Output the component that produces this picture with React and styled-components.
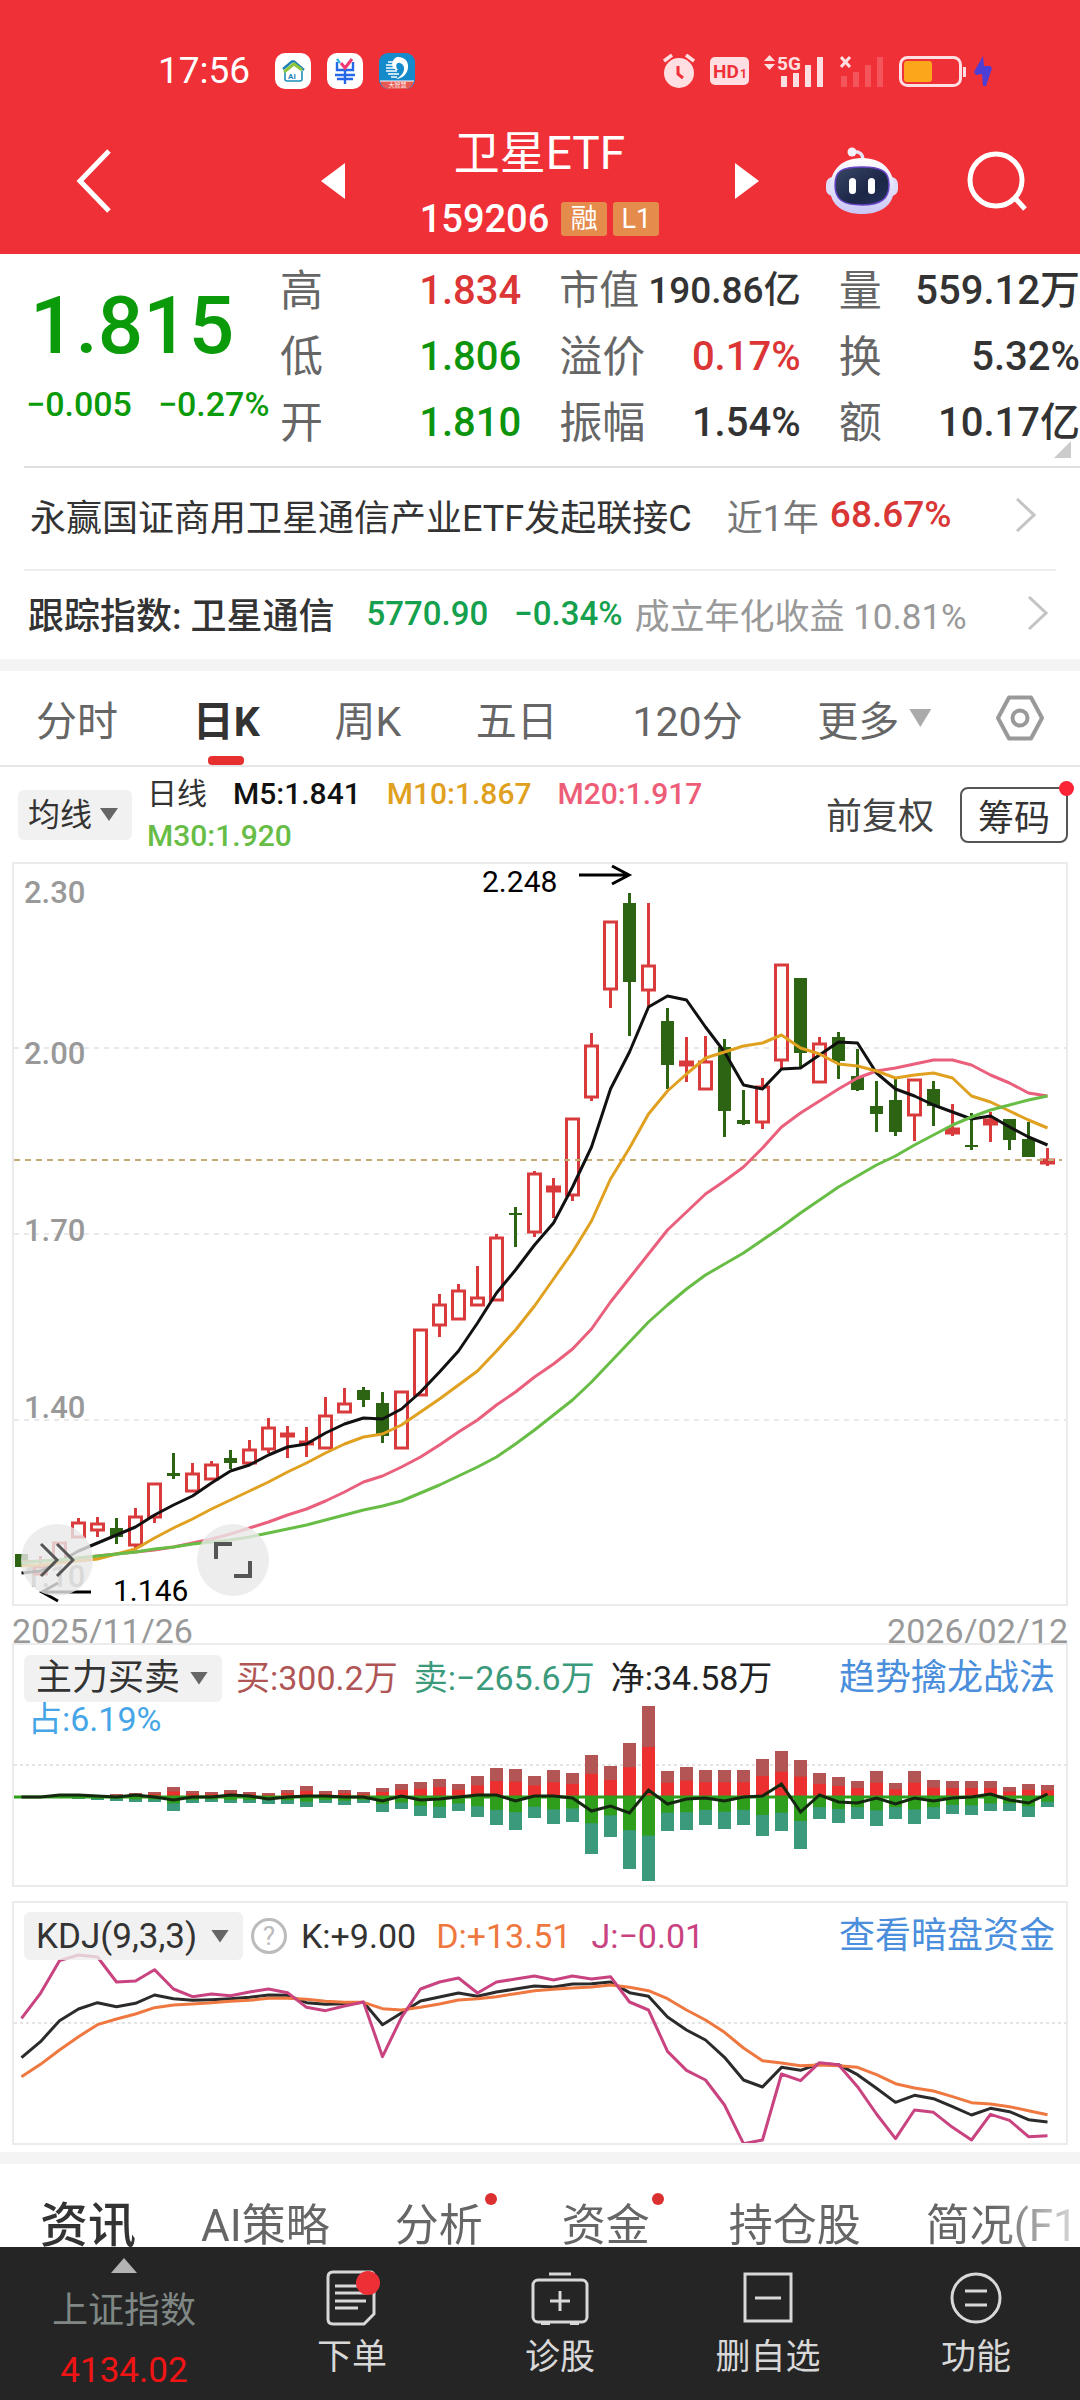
import React, { useState } from 'react'
import styled, { createGlobalStyle } from 'styled-components'

// K线: [颜色, 实体顶, 实体底, 最高, 最低]
const candles = [
  ['g', 1554, 1567, 1554, 1567], ['r', 1567, 1574, 1556, 1576], ['r', 1543, 1562, 1543, 1562],
  ['r', 1523, 1537, 1518, 1537], ['r', 1524, 1530, 1517, 1537], ['g', 1528, 1537, 1518, 1544],
  ['r', 1517, 1545, 1508, 1549], ['r', 1484, 1517, 1484, 1523], ['g', 1473, 1476, 1453, 1479],
  ['r', 1474, 1491, 1463, 1491], ['r', 1465, 1479, 1461, 1479], ['g', 1458, 1463, 1450, 1469],
  ['r', 1450, 1463, 1440, 1463], ['r', 1428, 1449, 1418, 1453], ['r', 1434, 1436, 1426, 1458],
  ['r', 1442, 1444, 1427, 1457], ['r', 1416, 1448, 1397, 1448], ['r', 1404, 1412, 1388, 1412],
  ['g', 1390, 1400, 1387, 1407], ['g', 1403, 1436, 1392, 1443], ['r', 1392, 1448, 1392, 1448],
  ['r', 1330, 1395, 1330, 1395], ['r', 1305, 1325, 1294, 1337], ['r', 1291, 1319, 1284, 1319],
  ['r', 1298, 1305, 1266, 1305], ['r', 1238, 1300, 1234, 1300], ['g', 1213, 1215, 1207, 1247],
  ['r', 1174, 1232, 1171, 1237], ['r', 1187, 1191, 1178, 1218], ['r', 1119, 1195, 1119, 1201],
  ['r', 1046, 1097, 1033, 1101], ['r', 922, 989, 922, 1008], ['g', 903, 982, 893, 1036],
  ['r', 966, 990, 903, 1006], ['g', 1021, 1065, 1008, 1089], ['r', 1062, 1065, 1037, 1082],
  ['r', 1062, 1089, 1036, 1089], ['g', 1047, 1111, 1039, 1137], ['g', 1120, 1124, 1090, 1125],
  ['r', 1087, 1122, 1078, 1129], ['r', 965, 1060, 965, 1069], ['g', 978, 1053, 978, 1069],
  ['r', 1044, 1082, 1037, 1082], ['g', 1037, 1061, 1032, 1079], ['g', 1076, 1090, 1049, 1091],
  ['g', 1106, 1114, 1081, 1132], ['g', 1100, 1132, 1078, 1136], ['r', 1080, 1115, 1080, 1141],
  ['g', 1089, 1106, 1081, 1126], ['r', 1129, 1133, 1104, 1136], ['g', 1145, 1147, 1113, 1150],
  ['r', 1120, 1124, 1112, 1142], ['g', 1119, 1140, 1119, 1150], ['g', 1139, 1157, 1122, 1157],
  ['r', 1160, 1163, 1148, 1166],
]

const ma5 = [1573, 1571, 1562, 1551, 1543, 1535, 1527, 1515, 1505, 1496, 1483, 1471, 1465, 1455, 1447, 1444, 1433, 1424, 1418, 1419, 1409, 1392, 1372, 1351, 1323, 1293, 1270, 1245, 1223, 1187, 1147, 1089, 1052, 1007, 996, 1000, 1027, 1052, 1085, 1089, 1069, 1068, 1055, 1042, 1043, 1073, 1089, 1096, 1105, 1112, 1119, 1116, 1127, 1137, 1145]
const ma10 = [1566, 1565, 1563, 1561, 1559, 1554, 1549, 1538, 1528, 1519, 1509, 1500, 1491, 1482, 1472, 1463, 1453, 1444, 1437, 1434, 1425, 1412, 1399, 1385, 1371, 1351, 1330, 1306, 1279, 1252, 1221, 1179, 1148, 1114, 1091, 1074, 1058, 1052, 1046, 1043, 1035, 1048, 1054, 1064, 1066, 1071, 1078, 1075, 1073, 1078, 1096, 1102, 1111, 1120, 1128]
const ma20 = [1562, 1561, 1560, 1558, 1556, 1554, 1552, 1550, 1547, 1543, 1539, 1534, 1528, 1522, 1515, 1509, 1501, 1492, 1482, 1476, 1467, 1457, 1445, 1432, 1420, 1405, 1392, 1377, 1364, 1349, 1329, 1302, 1278, 1254, 1230, 1212, 1194, 1181, 1167, 1148, 1127, 1113, 1101, 1089, 1078, 1071, 1068, 1064, 1060, 1060, 1065, 1075, 1083, 1093, 1096]
const ma30 = [1563, 1561, 1560, 1558, 1556, 1554, 1552, 1549, 1547, 1544, 1542, 1540, 1537, 1533, 1529, 1525, 1520, 1515, 1510, 1506, 1501, 1493, 1485, 1476, 1467, 1457, 1444, 1430, 1415, 1400, 1382, 1362, 1342, 1322, 1305, 1289, 1275, 1264, 1253, 1240, 1227, 1213, 1200, 1187, 1176, 1165, 1156, 1145, 1135, 1125, 1117, 1110, 1105, 1100, 1096]

const buys = [1, 1, 1, 1, 1, 3, 4, 5, 10, 6, 5, 7, 5, 4, 7, 11, 6, 7, 5, 9, 13, 15, 18, 13, 21, 29, 28, 21, 27, 24, 42, 31, 54, 91, 26, 30, 27, 27, 27, 38, 46, 37, 24, 20, 16, 26, 14, 26, 17, 16, 16, 16, 10, 13, 12]
const sells = [1, 1, 1, 2, 3, 4, 5, 5, 14, 6, 5, 6, 6, 7, 7, 10, 6, 8, 6, 15, 12, 19, 21, 14, 20, 28, 33, 21, 27, 25, 57, 40, 72, 84, 34, 33, 28, 32, 28, 39, 34, 52, 22, 26, 22, 29, 22, 27, 22, 17, 18, 14, 14, 20, 10]
const net = [0, 0, 2, 2, 1, 0, 2, 0, -3, 0, 0, 2, 1, -2, 0, 1, 1, 0, 0, -4, 1, -3, -2, 0, 2, 2, -4, 1, 1, -1, -14, -9, -16, 7, -7, -2, -1, -4, 0, 1, 13, -15, 2, -5, -6, -1, -7, -1, -4, -1, 0, 3, -3, -6, 3]

const kLine = [533, 485, 422, 387, 368, 380, 370, 345, 356, 361, 359, 356, 352, 345, 346, 368, 373, 371, 367, 434, 399, 363, 351, 339, 349, 336, 327, 318, 321, 312, 311, 306, 338, 349, 411, 450, 480, 532, 600, 621, 562, 571, 551, 554, 584, 625, 667, 646, 656, 680, 705, 685, 695, 719, 726]
const dLine = [590, 553, 510, 470, 434, 417, 402, 383, 375, 372, 368, 364, 361, 355, 355, 358, 364, 367, 367, 386, 390, 382, 372, 360, 356, 350, 341, 332, 328, 324, 321, 315, 322, 332, 356, 390, 420, 457, 504, 542, 549, 557, 555, 557, 562, 584, 611, 624, 633, 650, 668, 672, 680, 692, 704]
const jLine = [415, 340, 242, 225, 231, 306, 303, 269, 327, 350, 342, 347, 336, 327, 338, 382, 392, 378, 366, 530, 412, 327, 306, 294, 339, 306, 297, 288, 300, 288, 297, 290, 366, 390, 514, 571, 600, 675, 791, 780, 582, 602, 548, 554, 620, 702, 776, 690, 697, 742, 780, 703, 721, 770, 767]

const STEP = 19
const ZERO = 152
const xAt = (i) => 21.5 + i * STEP
const toPoints = (list, fn = (v) => v) => list.map((v, i) => `${xAt(i)},${fn(v)}`).join(' ')
const kdjY = (v) => (v - 69) / 3

const quotes = [
  [['高', '1.834', 'up'], ['低', '1.806', 'down'], ['开', '1.810', 'down']],
  [['市值', '190.86亿', '', true], ['溢价', '0.17%', 'up'], ['振幅', '1.54%', '']],
  [['量', '559.12万', ''], ['换', '5.32%', ''], ['额', '10.17亿', '']],
]
const periods = ['分时', '日K', '周K', '五日', '120分']
const infoTabs = [
  { name: '资讯' }, { name: 'AI策略' }, { name: '分析', dot: true },
  { name: '资金', dot: true }, { name: '持仓股' }, { name: '简况(F10)' },
]

export default function App() {
  const [period, setPeriod] = useState('日K')
  return (
    <>
      <GlobalStyle />
      <Page>
        <Header />
        <QuoteBoard />
        <FundRow href="#fund">
          <span>永赢国证商用卫星通信产业ETF发起联接C</span>
          <FundPeriod>近1年</FundPeriod>
          <FundRate>68.67%</FundRate>
          <Arrow />
        </FundRow>
        <IndexRow href="#index">
          <IndexName>跟踪指数: 卫星通信</IndexName>
          <IndexValue>5770.90</IndexValue>
          <IndexValue>−0.34%</IndexValue>
          <IndexNote>成立年化收益 10.81%</IndexNote>
          <Arrow />
        </IndexRow>
        <Divider />
        <PeriodBar>
          {periods.map((p) => (
            <PeriodButton key={p} $on={p === period} onClick={() => setPeriod(p)}>{p}</PeriodButton>
          ))}
          <PeriodButton>更多<Caret $w={22} $h={18} $color="#aaa" /></PeriodButton>
          <SettingButton aria-label="设置">
            <svg width="48" height="46" viewBox="0 0 48 46" fill="none" stroke="#999" strokeWidth="4" strokeLinejoin="round">
              <path d="M13 2.500H35L46 23L35 43.500H13L2 23Z" />
              <circle cx="24" cy="23" r="7.500" />
            </svg>
          </SettingButton>
        </PeriodBar>
        <MaBar>
          <Picker label="均线" options={['均线', 'BOLL']} width={114} height={50} size={32} />
          <MaLegend>
            <Legend $color="#333" $light>日线</Legend>
            <Legend $color="#111">M5:1.841</Legend>
            <Legend $color="#e0a020">M10:1.867</Legend>
            <Legend $color="#ee5d78">M20:1.917</Legend>
            <Legend $color="#67bd45">M30:1.920</Legend>
          </MaLegend>
          <Adjust>前复权</Adjust>
          <ChipButton>筹码<ChipDot /></ChipButton>
        </MaBar>
        <CandlePanel />
        <DateRow><span>2025/11/26</span><span>2026/02/12</span></DateRow>
        <ForcePanel />
        <KdjPanel />
        <Divider />
        <InfoTabs>
          {infoTabs.map((t, i) => (
            <InfoTab key={t.name} $on={i === 0}>{t.name}{t.dot && <Dot />}</InfoTab>
          ))}
        </InfoTabs>
        <BottomNav />
      </Page>
    </>
  )
}

function Header() {
  return (
    <HeaderStyle>
      <StatusBar>
        <Clock>17:56</Clock>
        <svg width="36" height="36" viewBox="0 0 36 36" fill="none">
          <rect width="36" height="36" rx="10" fill="#fff" />
          <path d="M10 19v7q0 2 2 2h13q2 0 2-2v-8" stroke="#1d8fb8" strokeWidth="1.600" />
          <path d="M8 16L17 8.500H19L29 17" stroke="#1c7fb5" strokeWidth="2.400" />
          <path d="M9 19L19 11L27 17" stroke="#8cc63f" strokeWidth="3" />
          <text x="13" y="25.500" fontSize="8" fontWeight="700" fill="#1d7fb8">AI</text>
        </svg>
        <svg width="36" height="36" viewBox="0 0 36 36" fill="none" strokeWidth="2.400">
          <rect width="36" height="36" rx="10" fill="#fff" />
          <path d="M10 9V17H26V9M8 22H28M18 17V31M10 26H26" stroke="#2468e8" />
          <path d="M10 6L13 10" stroke="#35b4e8" />
          <path d="M14 10L18 15L25 6" stroke="#ed3a72" strokeWidth="3" />
        </svg>
        <svg width="36" height="36" viewBox="0 0 36 36" fill="none">
          <rect width="36" height="36" rx="9" fill="#168bcb" />
          <path d="M1 28H35Q33 36 26 36H10Q3 36 1 28Z" fill="#e85b55" />
          <path d="M1 28H35" stroke="#fff" />
          <path d="M18 4C34 3 32 25 17 26C27 21 27 12 21 10C17 9 16 14 19 17C11 17 12 6 18 4Z" fill="#fff" />
          <path d="M9 9H15M7 12H14M7 15H15M7 18H18M9 21H20M12 24H18" stroke="#fff" strokeWidth="1.600" />
          <text x="9.500" y="34" fontSize="6" fill="#fff">大智慧</text>
        </svg>
        <StatusIcons>
          <svg width="32" height="34" viewBox="0 0 32 34" stroke="#ffdfe1" fill="none">
            <circle cx="16" cy="19" r="15" fill="#ffdfe1" stroke="none" />
            <path d="M1 7L9 1M31 7L23 1" strokeWidth="3.500" />
            <path d="M15 12V20L20 24" stroke="#f03037" strokeWidth="3" />
          </svg>
          <svg width="39" height="28" viewBox="0 0 39 28">
            <rect width="39" height="28" rx="5" fill="#ffdfe1" />
            <text x="3" y="21" fontSize="19" fontWeight="700" fill="#f03037">HD</text>
            <text x="30" y="21" fontSize="12" fontWeight="700" fill="#f03037">1</text>
          </svg>
          <svg width="61" height="34" viewBox="0 0 61 34" fill="#ffdfe1">
            <path d="M0 7L5.500 1L11 7ZM0 10L5.500 16L11 10Z" />
            <text x="13" y="16" fontSize="19" fontWeight="700">5G</text>
            <path d="M17 22h6v11h-6zM29 19h6v14h-6zM41 11h6v22h-6zM53 3h6v30h-6z" />
          </svg>
          <svg width="44" height="34" viewBox="0 0 44 34">
            <path d="M1 3L10 13M10 3L1 13" stroke="#ffdfe1" strokeWidth="3" />
            <path d="M1 22h6v11h-6zM13 18h6v15h-6zM25 11h6v22h-6zM37 3h6v30h-6z" fill="#f4555b" />
          </svg>
          <svg width="67" height="31" viewBox="0 0 67 31" fill="none">
            <rect x="1.500" y="1.500" width="60" height="28" rx="7" stroke="#ffdfe1" strokeWidth="3" />
            <rect x="5" y="5" width="28" height="21" rx="3" fill="#fca61c" />
            <path d="M65.500 11V21" stroke="#ffdfe1" strokeWidth="3" />
          </svg>
          <svg width="18" height="32" viewBox="0 0 18 32">
            <path d="M9 1L0 17L2 20L8 19L9 31H12L18 13L16 11H10Z" fill="#4c3fd6" />
          </svg>
        </StatusIcons>
      </StatusBar>
      <TitleBar>
        <BackButton aria-label="返回">
          <svg width="36" height="64" viewBox="0 0 36 64" fill="none" stroke="#fff" strokeWidth="5">
            <path d="M33 2L4 32L33 62" />
          </svg>
        </BackButton>
        <Switcher>
          <IconButton aria-label="上一只">
            <svg width="24" height="36" viewBox="0 0 24 36"><path d="M24 0V36L0 18Z" fill="#fff" /></svg>
          </IconButton>
          <TitleBox>
            <h1>卫星ETF</h1>
            <CodeRow>159206 <Tag>融</Tag><Tag>L1</Tag></CodeRow>
          </TitleBox>
          <IconButton aria-label="下一只">
            <svg width="24" height="36" viewBox="0 0 24 36"><path d="M0 0V36L24 18Z" fill="#fff" /></svg>
          </IconButton>
        </Switcher>
        <HeaderTools>
          <IconButton aria-label="智能助手">
            <svg width="72" height="68" viewBox="0 0 72 68">
              <defs>
                <linearGradient id="shell" x1="0" y1="0" x2="0" y2="1">
                  <stop offset="0" stopColor="#fff" /><stop offset="1" stopColor="#c9c6f6" />
                </linearGradient>
                <linearGradient id="face" x1="0" y1="0" x2="1" y2="1">
                  <stop offset="0" stopColor="#3b4767" /><stop offset=".6" stopColor="#1c2747" /><stop offset="1" stopColor="#23305a" />
                </linearGradient>
              </defs>
              <path d="M26 5C34 4 37 7 37 14" stroke="#e6e4f6" strokeWidth="3.500" fill="none" />
              <circle cx="26" cy="5" r="4.500" fill="#f4f0fa" />
              <rect x="0" y="30" width="72" height="19" rx="7" fill="#dfdcf8" />
              <path d="M36 11C58 11 68 25 68 41C68 59 54 67 36 67S4 59 4 41C4 25 14 11 36 11Z" fill="url(#shell)" />
              <path d="M36 20C57 20 63 25 63 38S56 58 36 58S9 52 9 38S15 20 36 20Z" fill="url(#face)" stroke="#6a45c8" strokeWidth="1.500" />
              <rect x="23" y="31" width="7" height="16" rx="3.500" fill="#fff" />
              <rect x="42" y="31" width="7" height="16" rx="3.500" fill="#fff" />
            </svg>
          </IconButton>
          <IconButton aria-label="搜索">
            <svg width="60" height="60" viewBox="0 0 60 60" fill="none" stroke="#fff" strokeWidth="5">
              <circle cx="29" cy="29" r="26" /><path d="M48 47L58 58" />
            </svg>
          </IconButton>
        </HeaderTools>
      </TitleBar>
    </HeaderStyle>
  )
}

function QuoteBoard() {
  return (
    <QuoteStyle>
      <PriceBox>
        <Price>1.815</Price>
        <Change><span>−0.005</span><span>−0.27%</span></Change>
      </PriceBox>
      <QuoteGrid>
        {quotes.map((col, i) => (
          <div key={i}>
            {col.map(([label, value, tone, tight]) => (
              <QuoteItem key={label} $tight={tight}>
                <dt>{label}</dt>
                <QuoteValue $tone={tone}>{value}</QuoteValue>
              </QuoteItem>
            ))}
          </div>
        ))}
      </QuoteGrid>
      <Corner />
    </QuoteStyle>
  )
}

function Arrow() {
  return (
    <ArrowSvg width="21" height="34" viewBox="0 0 21 34" fill="none" stroke="#c4c4c4" strokeWidth="3">
      <path d="M2 1L19 17L2 33" />
    </ArrowSvg>
  )
}

function Picker({ label, options, width, height, size }) {
  return (
    <PickerStyle $w={width} $h={height} $size={size}>
      <select aria-label={label}>
        {options.map((o) => <option key={o}>{o}</option>)}
      </select>
      <Caret $w={18} $h={13} $color="#666" />
    </PickerStyle>
  )
}

function CandlePanel() {
  return (
    <Panel>
      <svg viewBox="14 864 1052 740">
        <g stroke="#e9e9e9" strokeWidth="2" strokeDasharray="5 5">
          <path d="M14 1048H1066M14 1234H1066M14 1420H1066" />
        </g>
        <g fontSize="31" fontWeight="500" fill="#999">
          <text x="24" y="903">2.30</text>
          <text x="24" y="1064">2.00</text>
          <text x="24" y="1241">1.70</text>
          <text x="24" y="1418">1.40</text>
          <text x="24" y="1587">1.10</text>
        </g>
        {candles.map(([c, top, bottom, high, low], i) => {
          const x = xAt(i)
          const up = c === 'r'
          const flat = bottom - top < 6
          const color = up ? '#d93a3c' : '#2d6414'
          return (
            <g key={i} stroke={color} strokeWidth="3">
              <path d={`M${x} ${high}V${top}M${x} ${bottom}V${low}`} />
              {up
                ? <rect x={x - 6} y={top} width="12" height={bottom - top} fill={flat ? color : 'none'} />
                : <rect x={x - 6.5} y={top} width="13" height={bottom - top} fill={color} stroke="none" />}
            </g>
          )
        })}
        <path d="M14 1160H1062" stroke="#c3ab74" strokeWidth="2" strokeDasharray="6 5" />
        <g fill="none" strokeWidth="3" strokeLinejoin="round">
          <polyline points={toPoints(ma20)} stroke="#ea5f7b" />
          <polyline points={toPoints(ma5)} stroke="#111" />
          <polyline points={toPoints(ma10)} stroke="#e0a020" />
          <polyline points={toPoints(ma30)} stroke="#67bd45" />
        </g>
        <g fill="none" stroke="#000" strokeWidth="3">
          <path d="M579 875H629M612 866L629 875L612 884" />
          <path d="M91 1592H42M58 1583L42 1592L58 1601" />
        </g>
        <g fontSize="30" fill="#000">
          <text x="482" y="892">2.248</text>
          <text x="113" y="1601">1.146</text>
        </g>
      </svg>
      <ChartTools>
        <RoundButton aria-label="展开">
          <svg width="36" height="36" viewBox="0 0 36 36" fill="none" stroke="#555" strokeWidth="3">
            <path d="M2 2L18 18L2 34M18 2L34 18L18 34" />
          </svg>
        </RoundButton>
        <RoundButton aria-label="全屏">
          <svg width="38" height="38" viewBox="0 0 38 38" fill="none" stroke="#555" strokeWidth="4">
            <path d="M2 18V3H18M36 20V35H20" />
          </svg>
        </RoundButton>
      </ChartTools>
    </Panel>
  )
}

function ForcePanel() {
  return (
    <Panel $gap={14}>
      <svg viewBox="14 0 1052 240">
        <path d="M14 120H1066" stroke="#e4e4e4" strokeWidth="2" strokeDasharray="3 3" />
        {buys.map((b, i) => {
          const x = xAt(i) - 6.5
          const s = sells[i]
          return (
            <g key={i}>
              <rect x={x} y={ZERO - b} width="13" height={b} fill="#b35555" />
              <rect x={x} y={ZERO - b * 0.55} width="13" height={b * 0.55} fill="#ec2f2f" />
              <rect x={x} y={ZERO} width="13" height={s} fill="#3a9a7b" />
              <rect x={x} y={ZERO} width="13" height={s * 0.46} fill="#2f9e1c" />
            </g>
          )
        })}
        <path d="M14 152H1054" stroke="#2f9e1c" strokeWidth="3" />
        <polyline points={toPoints(net, (v) => ZERO - v)} fill="none" stroke="#14280f" strokeWidth="3" />
      </svg>
      <PanelHead>
        <Picker label="主力指标" options={['主力买卖', '成交量']} width={198} height={47} size={36} />
        <PanelLegend $gap={16}>
          <Legend $size={34} $color="#b05555">买:300.2万</Legend>
          <Legend $size={34} $color="#3a9a7b">卖:−265.6万</Legend>
          <Legend $size={34} $color="#222">净:34.58万</Legend>
        </PanelLegend>
        <PanelLink href="#trend">趋势擒龙战法</PanelLink>
        <PanelNote>占:6.19%</PanelNote>
      </PanelHead>
    </Panel>
  )
}

function KdjPanel() {
  return (
    <Panel $gap={7}>
      <svg viewBox="14 0 1052 240">
        <path d="M14 120H1066" stroke="#e4e4e4" strokeWidth="2" strokeDasharray="3 3" />
        <g fill="none" strokeWidth="3" strokeLinejoin="round">
          <polyline points={toPoints(kLine, kdjY)} stroke="#2b2b2b" />
          <polyline points={toPoints(dLine, kdjY)} stroke="#ee7840" />
          <polyline points={toPoints(jLine, kdjY)} stroke="#c8437f" />
        </g>
      </svg>
      <PanelHead>
        <Picker label="技术指标" options={['KDJ(9,3,3)', 'MACD']} width={219} height={48} size={35} />
        <HelpButton aria-label="指标说明">?</HelpButton>
        <PanelLegend $gap={20}>
          <Legend $size={34} $color="#333">K:+9.00</Legend>
          <Legend $size={34} $color="#ee7840">D:+13.51</Legend>
          <Legend $size={34} $color="#c8437f">J:−0.01</Legend>
        </PanelLegend>
        <PanelLink href="#dark">查看暗盘资金</PanelLink>
      </PanelHead>
    </Panel>
  )
}

function BottomNav() {
  return (
    <NavStyle>
      <IndexBox>
        <UpMark />
        <span>上证指数</span>
        <strong>4134.02</strong>
      </IndexBox>
      <NavButton>
        <svg width="56" height="56" viewBox="0 0 56 56" fill="none" stroke="#d8d8d8" strokeWidth="3">
          <path d="M9 2H46Q50 2 50 6V44L40 54H9Q4 54 4 49V7Q4 2 9 2Z" />
          <path d="M11 16H40M11 23H42M11 31H42M11 38H34" />
          <circle cx="44" cy="13" r="12" fill="#ec3035" stroke="none" />
        </svg>
        下单
      </NavButton>
      <NavButton>
        <svg width="58" height="56" viewBox="0 0 58 56" fill="none" stroke="#d8d8d8" strokeWidth="3">
          <path d="M18 4H40" />
          <rect x="2" y="10" width="54" height="42" rx="5" />
          <path d="M29 21V41M19 31H39" />
          <path d="M10 53.500H19M39 53.500H48" />
        </svg>
        诊股
      </NavButton>
      <NavButton>
        <svg width="50" height="56" viewBox="0 0 50 56" fill="none" stroke="#d8d8d8" strokeWidth="3">
          <rect x="2" y="4" width="46" height="47" />
          <path d="M12 28H38" />
        </svg>
        删自选
      </NavButton>
      <NavButton>
        <svg width="52" height="56" viewBox="0 0 52 56" fill="none" stroke="#d8d8d8" strokeWidth="3">
          <circle cx="26" cy="28" r="24" />
          <path d="M15 21H37M15 35H37" />
        </svg>
        功能
      </NavButton>
    </NavStyle>
  )
}

const GlobalStyle = createGlobalStyle`
  * {
    box-sizing: border-box;
  }
  body {
    margin: 0;
    background: #fff;
    color: #333;
    font-family: Roboto, "Noto Sans CJK SC", sans-serif;
  }
  h1, dl, dt, dd {
    margin: 0;
  }
  button, select {
    padding: 0;
    border: 0;
    background: none;
    color: inherit;
    font-family: inherit;
  }
  a {
    color: inherit;
    text-decoration: none;
  }
  svg {
    display: block;
  }
`

const Page = styled.div`
  display: flex;
  flex-direction: column;
  width: 100%;
  min-height: 100vh;
  overflow-x: hidden;
`

const HeaderStyle = styled.header`
  background: #f03037;
  color: #fff;
`

const StatusBar = styled.div`
  display: flex;
  align-items: center;
  gap: 16px;
  height: 108px;
  padding: 34px 88px 0 158px;
`

const Clock = styled.span`
  margin-right: 9px;
  font-size: 37px;
  line-height: 40px;
`

const StatusIcons = styled.div`
  display: flex;
  align-items: center;
  gap: 15px;
  margin-left: auto;
  svg:last-child {
    margin-left: -7px;
  }
`

const TitleBar = styled.div`
  display: grid;
  grid-template-columns: 1fr auto 1fr;
  align-items: center;
  height: 146px;
  padding: 0 53px 0 76px;
`

const IconButton = styled.button`
  display: flex;
  flex: none;
`

const BackButton = styled(IconButton)`
  justify-self: start;
`

const Switcher = styled.div`
  display: flex;
  align-items: center;
  justify-content: space-between;
  width: 438px;
  margin-left: -24px;
`

const TitleBox = styled.div`
  display: flex;
  flex-direction: column;
  align-items: center;
  padding-top: 12px;
  h1 {
    font-size: 46px;
    font-weight: 400;
    line-height: 64px;
  }
`

const CodeRow = styled.div`
  display: flex;
  align-items: center;
  gap: 6px;
  font-size: 38px;
  font-weight: 500;
  line-height: 68px;
`

const Tag = styled.span`
  min-width: 46px;
  height: 34px;
  border-radius: 3px;
  background: #e58b4c;
  font-size: 27px;
  font-weight: 400;
  line-height: 34px;
  text-align: center;
  &:first-of-type {
    margin-left: 6px;
  }
`

const HeaderTools = styled.div`
  display: flex;
  align-items: center;
  justify-content: flex-end;
  gap: 69px;
`

const QuoteStyle = styled.section`
  position: relative;
  display: flex;
  height: 212px;
`

const PriceBox = styled.div`
  width: 280px;
  padding: 26px 0 0 26px;
  color: #0a9a0a;
`

const Price = styled.div`
  padding-left: 4px;
  font-size: 80px;
  font-weight: 500;
  line-height: 92px;
`

const Change = styled.div`
  display: flex;
  gap: 26px;
  font-size: 34px;
  font-weight: 500;
  line-height: 64px;
  white-space: nowrap;
`

const QuoteGrid = styled.dl`
  display: grid;
  flex: 1;
  grid-template-columns: repeat(3, 1fr);
  gap: 38px;
  padding-top: 4px;
`

const QuoteItem = styled.div`
  display: flex;
  justify-content: space-between;
  font-size: ${(p) => (p.$tight ? '37px' : '40px')};
  line-height: 66px;
  white-space: nowrap;
  dt {
    color: #666;
    font-size: ${(p) => (p.$tight ? '40px' : '43px')};
  }
`

const tones = { up: '#dc3535', down: '#0d940d' }

const QuoteValue = styled.dd`
  color: ${(p) => tones[p.$tone] || '#333'};
  font-weight: 500;
`

const Corner = styled.i`
  position: absolute;
  right: 9px;
  bottom: 8px;
  border-left: 17px solid transparent;
  border-bottom: 17px solid #ccc;
`

const FundRow = styled.a`
  display: flex;
  align-items: center;
  height: 103px;
  margin-left: 24px;
  padding: 0 44px 8px 6px;
  border-top: 2px solid #dfdfdf;
  font-size: 36px;
  white-space: nowrap;
`

const FundPeriod = styled.span`
  margin-left: 35px;
  color: #777;
`

const FundRate = styled.span`
  margin-left: 11px;
  color: #d93636;
  font-size: 37px;
  font-weight: 500;
`

const IndexRow = styled(FundRow)`
  height: 90px;
  margin-right: 24px;
  padding: 0 8px 4px 4px;
  border-top-color: #eee;
`

const IndexName = styled.span`
  font-weight: 500;
`

const IndexValue = styled.span`
  margin-left: 32px;
  color: #14a04c;
  font-size: 33px;
  font-weight: 500;
  & + & {
    margin-left: 26px;
  }
`

const IndexNote = styled.span`
  margin-left: 12px;
  color: #999;
  font-size: 35px;
`

const ArrowSvg = styled.svg`
  margin-left: auto;
`

const Divider = styled.div`
  height: 12px;
  background: #f4f4f4;
`

const PeriodBar = styled.nav`
  display: flex;
  align-items: stretch;
  justify-content: space-between;
  height: 96px;
  padding: 0 36px;
  border-bottom: 2px solid #e6e6e6;
`

const PeriodButton = styled.button`
  position: relative;
  display: flex;
  align-items: center;
  gap: 10px;
  color: ${(p) => (p.$on ? '#333' : '#666')};
  font-size: 41px;
  font-weight: ${(p) => (p.$on ? 700 : 400)};
  &::after {
    content: '';
    display: ${(p) => (p.$on ? 'block' : 'none')};
    position: absolute;
    bottom: 0;
    left: 50%;
    width: 36px;
    height: 9px;
    margin-left: -18px;
    border-radius: 4px;
    background: #e62f2f;
  }
`

const SettingButton = styled(IconButton)`
  align-items: center;
  margin-left: -10px;
`

const Caret = styled.i`
  width: ${(p) => p.$w}px;
  height: ${(p) => p.$h}px;
  background: ${(p) => p.$color};
  clip-path: polygon(0 0, 100% 0, 50% 100%);
  pointer-events: none;
`

const MaBar = styled.div`
  display: flex;
  align-items: center;
  height: 95px;
  padding: 0 12px 0 18px;
`

const PickerStyle = styled.span`
  display: grid;
  flex: none;
  align-items: center;
  width: ${(p) => p.$w}px;
  height: ${(p) => p.$h}px;
  border-radius: 6px;
  background: rgba(238, 238, 238, 0.8);
  select {
    grid-area: 1 / 1;
    width: 100%;
    height: 100%;
    padding-left: ${(p) => (p.$size > 32 ? 12 : 10)}px;
    appearance: none;
    font-size: ${(p) => p.$size}px;
  }
  ${Caret} {
    grid-area: 1 / 1;
    justify-self: end;
    margin-right: 14px;
  }
`

const MaLegend = styled.div`
  display: flex;
  flex: 1;
  flex-wrap: wrap;
  gap: 0 26px;
  margin-left: 15px;
`

const Legend = styled.span`
  color: ${(p) => p.$color};
  font-size: ${(p) => p.$size || 30}px;
  font-weight: ${(p) => (p.$size || p.$light ? 400 : 500)};
  line-height: 42px;
  white-space: nowrap;
`

const Adjust = styled.span`
  margin-bottom: 4px;
  font-size: 36px;
  color: #444;
`

const ChipButton = styled.button`
  position: relative;
  width: 108px;
  height: 56px;
  margin-left: 26px;
  border: 2px solid #555;
  border-radius: 8px;
  font-size: 36px;
`

const ChipDot = styled.i`
  position: absolute;
  top: -8px;
  right: -8px;
  width: 15px;
  height: 15px;
  border-radius: 50%;
  background: #fb2336;
`

const Panel = styled.section`
  display: grid;
  margin: 0 12px ${(p) => p.$gap || 0}px;
  border: 2px solid #ebebeb;
  > * {
    grid-area: 1 / 1;
    width: 100%;
  }
`

const ChartTools = styled.div`
  display: flex;
  align-self: end;
  gap: 104px;
  padding: 0 0 8px 7px;
`

const RoundButton = styled.button`
  display: flex;
  align-items: center;
  justify-content: center;
  width: 72px;
  height: 72px;
  border-radius: 50%;
  background: rgba(232, 232, 232, 0.8);
`

const DateRow = styled.div`
  display: flex;
  justify-content: space-between;
  height: 37px;
  padding: 0 12px;
  color: #999;
  font-size: 34px;
  line-height: 50px;
`

const PanelHead = styled.div`
  display: flex;
  flex-wrap: wrap;
  align-items: center;
  align-self: start;
  padding: 9px 11px 0 10px;
`

const PanelLegend = styled.div`
  display: flex;
  gap: ${(p) => p.$gap}px;
  margin-left: 14px;
`

const PanelLink = styled.a`
  margin-left: auto;
  color: #4a8edc;
  font-size: 36px;
  line-height: 48px;
`

const PanelNote = styled.span`
  flex-basis: 100%;
  padding-left: 4px;
  color: #45a5e6;
  font-size: 34px;
  line-height: 34px;
`

const HelpButton = styled.button`
  width: 36px;
  height: 36px;
  margin-left: 8px;
  border: 3px solid #bbb;
  border-radius: 50%;
  color: #bbb;
  font-size: 26px;
  line-height: 30px;
`

const InfoTabs = styled.nav`
  display: flex;
  gap: 65px;
  height: 83px;
  padding-left: 40px;
  overflow: hidden;
  mask-image: linear-gradient(to right, #000 92%, transparent 102%);
`

const InfoTab = styled.button`
  display: flex;
  flex: none;
  align-items: flex-start;
  color: ${(p) => (p.$on ? '#333' : '#666')};
  font-size: ${(p) => (p.$on ? 48 : 44)}px;
  font-weight: ${(p) => (p.$on ? 500 : 400)};
  line-height: 124px;
  white-space: nowrap;
`

const Dot = styled.i`
  width: 12px;
  height: 12px;
  margin: 29px 0 0 2px;
  border-radius: 50%;
  background: #dc3030;
`

const NavStyle = styled.footer`
  display: grid;
  grid-template-columns: 248fr repeat(4, 208fr);
  flex: 1;
  min-height: 153px;
  background: #252525;
`

const IndexBox = styled.div`
  display: flex;
  flex-direction: column;
  align-items: center;
  padding-top: 11px;
  color: #808886;
  font-size: 36px;
  line-height: 60px;
  strong {
    color: #f01414;
    font-size: 35px;
    font-weight: 400;
  }
`

const UpMark = styled.i`
  width: 26px;
  height: 15px;
  margin-bottom: 8px;
  background: #b4b4b4;
  clip-path: polygon(50% 0, 100% 100%, 0 100%);
`

const NavButton = styled.button`
  display: flex;
  flex-direction: column;
  align-items: center;
  gap: 6px;
  padding-top: 23px;
  color: #d8d8d8;
  font-size: 35px;
  line-height: 52px;
`
